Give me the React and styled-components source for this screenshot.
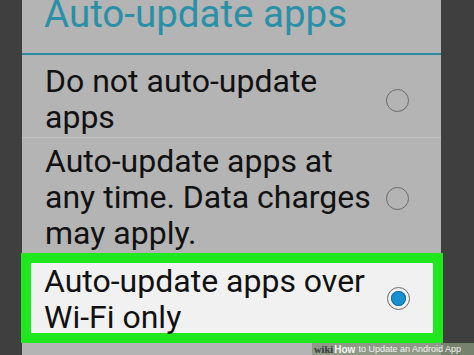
import React from "react";
import styled, { createGlobalStyle } from "styled-components";

const Global = createGlobalStyle`
  html, body { margin: 0; padding: 0; background: #3f3f3f; overflow: hidden; }
  * { box-sizing: border-box; }
`;

const Screen = styled.div`
  position: relative;
  width: 474px;
  height: 355px;
  overflow: hidden;
  background: #3f3f3f;
  display: flex;
  padding-left: 22px;
  font-family: Roboto, "Noto Sans", sans-serif;
`;

const Dialog = styled.div`
  width: 419px;
  height: 355px;
  background: #b4b4b4;
  display: flex;
  flex-direction: column;
`;

const Header = styled.div`
  height: 53px;
  padding-left: 22px;
  overflow: visible;
`;

const Title = styled.div`
  margin-top: -5px;
  font-size: 38.5px;
  line-height: 38px;
  color: #2a90a8;
  white-space: nowrap;
`;

const TealRule = styled.div`
  height: 2px;
  background: #2a8ca3;
`;

const Option = styled.div`
  display: flex;
  align-items: center;
  height: ${(p) => p.$h}px;
  padding: ${(p) => p.$pt}px 32px 0 23px;
  border-bottom: ${(p) => (p.$rule ? "1px solid #c2c2c2" : "none")};
`;

const Label = styled.div`
  flex: 1;
  align-self: flex-start;
  font-size: 32px;
  line-height: 36px;
  color: #111;
  white-space: nowrap;
`;

const Highlight = styled.div`
  margin: 0 -2px 0 -1px;
  height: 90px;
  border: 10px solid #1fe81f;
  background: #f1f1f1;
  display: flex;
  align-items: center;
  padding: 0 23px 0 13px;
`;

const Radio = styled.div`
  width: 23px;
  height: 23px;
  border-radius: 50%;
  border: 1.5px solid #6a6a6a;
  flex: none;
  display: flex;
  align-items: center;
  justify-content: center;
`;

const Dot = styled.div`
  width: 15px;
  height: 15px;
  border-radius: 50%;
  background: #1890cf;
  box-shadow: inset 0 0 0 1px #126fa5;
`;

const Watermark = styled.div`
  position: absolute;
  right: 0;
  bottom: 0;
  width: 162px;
  height: 12px;
  background: rgba(134, 147, 122, 0.8);
  display: flex;
  align-items: center;
  padding-left: 2px;
  font-family: "Liberation Sans", Arial, sans-serif;
  font-size: 9px;
  color: #f4f4f4;
  white-space: nowrap;
`;

const Wiki = styled.span`
  font-family: "Liberation Serif", serif;
  font-weight: bold;
  color: #3a3a3a;
  font-size: 10.5px;
  margin-right: 1px;
`;

const Bold = styled.span`
  font-weight: bold;
  font-size: 10px;
  margin-right: 3px;
`;

export default function App() {
  return (
    <>
      <Global />
      <Screen>
        <Dialog>
          <Header>
            <Title>Auto-update apps</Title>
          </Header>
          <TealRule />
          <Option $h={83} $pt={8} $rule>
            <Label>
              Do not auto-update
              <br />
              apps
            </Label>
            <Radio />
          </Option>
          <Option $h={115} $pt={5}>
            <Label>
              Auto-update apps at
              <br />
              any time. Data charges
              <br />
              may apply.
            </Label>
            <Radio />
          </Option>
          <Highlight>
            <Label>
              Auto-update apps over
              <br />
              Wi-Fi only
            </Label>
            <Radio>
              <Dot />
            </Radio>
          </Highlight>
        </Dialog>
        <Watermark>
          <Wiki>wiki</Wiki>
          <Bold>How</Bold>
          to Update an Android App
        </Watermark>
      </Screen>
    </>
  );
}
